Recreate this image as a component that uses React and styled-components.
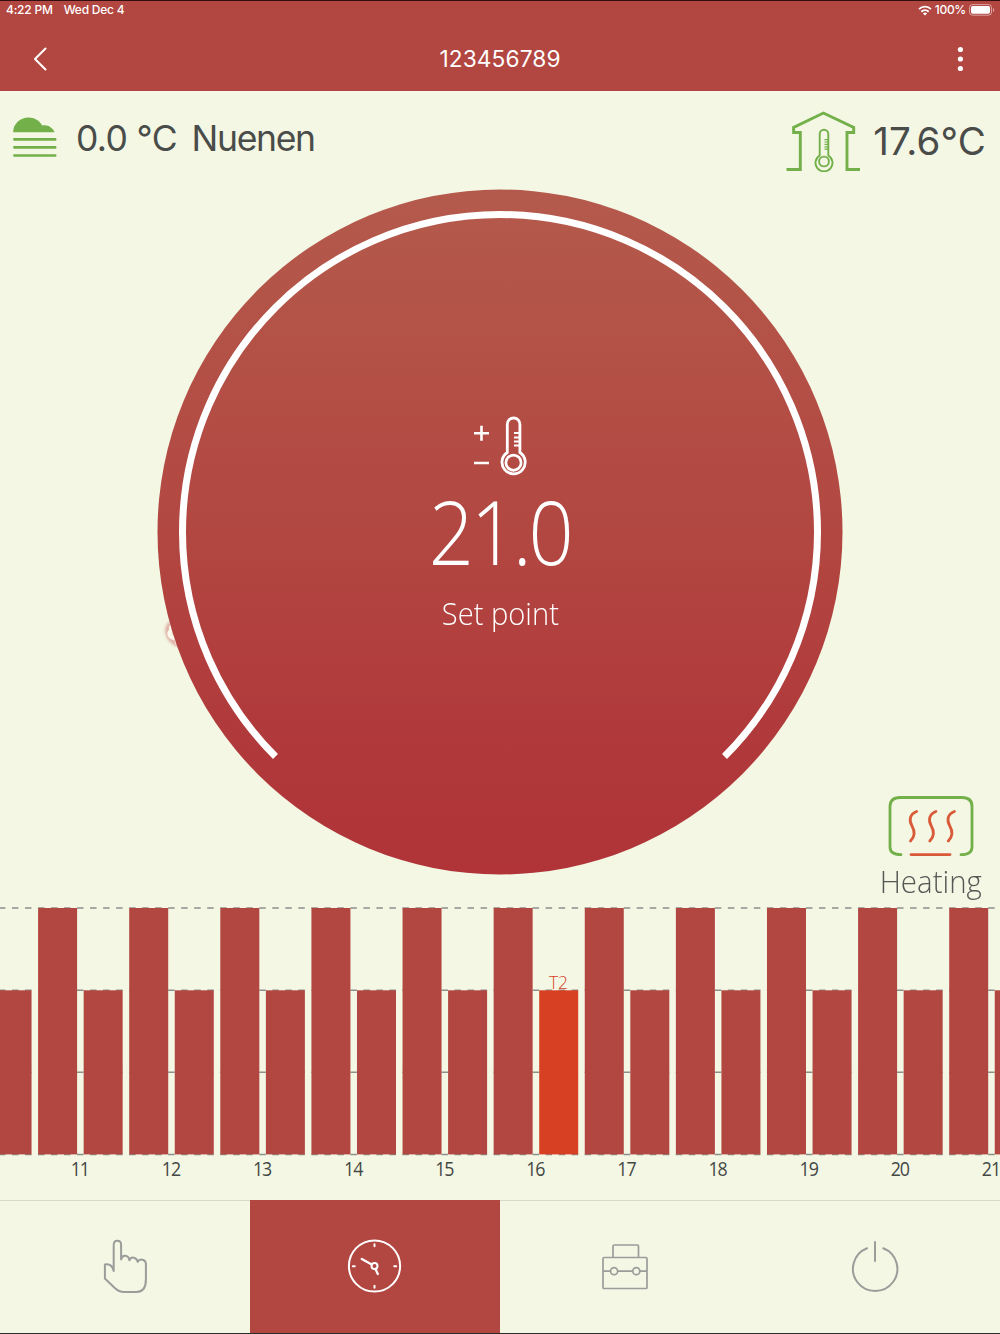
import React from "react";
import styled, { createGlobalStyle } from "styled-components";

const RED = "#b24640";
const CREAM = "#f3f7e4";
const GREEN = "#73b04a";
const GREY = "#9a9d9a";

const GlobalStyle = createGlobalStyle`
  * { box-sizing: border-box; }
  body { margin: 0; background: ${CREAM}; }
  svg { display: block; flex: none; }
`;

const Screen = styled.div`
  width: 1000px;
  height: 1334px;
  overflow: hidden;
  display: flex;
  flex-direction: column;
  background: ${CREAM};
  font-family: Inter, Roboto, sans-serif;
  border-bottom: 1px solid #2b2b2b;
`;

const Header = styled.header`
  height: 91px;
  flex: none;
  background: ${RED};
  border-top: 1px solid #33100f;
  color: #fff;
`;

const StatusBar = styled.div`
  height: 18px;
  display: flex;
  justify-content: space-between;
  align-items: center;
  padding: 0 5px 0 6px;
  font-size: 12px;
  font-weight: 500;
  line-height: 18px;
`;

const StatusGroup = styled.div`
  display: flex;
  align-items: center;
  gap: ${(p) => p.$gap}px;
  letter-spacing: ${(p) => p.$tracking || 0}px;
`;

const TitleBar = styled.div`
  height: 80px;
  display: grid;
  grid-template-columns: 80px 1fr 80px;
  align-items: center;
  justify-items: center;
`;

const Title = styled.h1`
  margin: 0;
  font-size: 22.7px;
  font-weight: 370;
  line-height: 28px;
  letter-spacing: 0.1px;
`;

const Climate = styled.section`
  height: 98px;
  flex: none;
  display: flex;
  justify-content: space-between;
  align-items: flex-start;
  padding: 19px 14px 0 12px;
  color: #4a4c4a;
  font-weight: 375;
`;

const Outdoor = styled.div`
  display: flex;
  align-items: center;
  padding-top: 4px;
  font-size: 35.5px;
  line-height: 42px;
`;

const Reading = styled.span`
  white-space: nowrap;
  margin-left: ${(p) => p.$left}px;
  padding-top: ${(p) => p.$drop || 0}px;
  letter-spacing: ${(p) => p.$tracking || 0}px;
`;

const Indoor = styled.div`
  display: flex;
  align-items: center;
  font-size: 38.5px;
  line-height: 62px;
`;

const Stage = styled.section`
  height: 718px;
  flex: none;
  display: grid;
  grid-template-columns: 157px 686px 157px;
`;

const SideColumn = styled.aside`
  display: flex;
  flex-direction: column;
  align-items: flex-end;
  justify-content: ${(p) => (p.$bottom ? "flex-end" : "flex-start")};
`;

const Dial = styled.div`
  display: grid;
  width: 686px;
  height: 686px;
  > * { grid-area: 1 / 1; }
`;

const DialContent = styled.div`
  display: flex;
  flex-direction: column;
  align-items: center;
  padding-top: 227px;
  color: #fff;
  font-family: "Open Sans", "Noto Sans", sans-serif;
  font-weight: 300;
`;

const SetValue = styled.div`
  font-size: 89px;
  line-height: 100px;
  margin-top: 3px;
  letter-spacing: -3.6px;
  transform: scaleX(0.89);
`;

const SetLabel = styled.div`
  font-size: 30.5px;
  line-height: 40px;
  margin-top: 12px;
  transform: scaleX(0.955);
`;

const Glint = styled.div`
  margin: 428px -29px 0 0;
`;

const Mode = styled.div`
  display: flex;
  flex-direction: column;
  align-items: center;
  width: 110px;
  margin: 0 14px 5px 0;
  color: #555855;
  font: 300 31px/42px "Open Sans", "Noto Sans", sans-serif;
`;

const ModeLabel = styled.span`
  margin-top: 3px;
  transform: scaleX(0.95);
`;

const Schedule = styled.section`
  height: 293px;
  flex: none;
`;

const Hour = styled.text`
  font: 390 20px "Open Sans", "Noto Sans", sans-serif;
  fill: #444844;
  text-anchor: middle;
  letter-spacing: -1.2px;
`;

const Period = styled.text`
  font: 300 17.5px "Open Sans", "Noto Sans", sans-serif;
  fill: #d84124;
  text-anchor: middle;
`;

const Tabs = styled.nav`
  flex: 1;
  display: grid;
  grid-template-columns: repeat(4, 1fr);
`;

const Tab = styled.button`
  border: 0;
  border-top: 1px solid ${(p) => (p.$active ? RED : "#d6dacb")};
  background: ${(p) => (p.$active ? RED : "transparent")};
  color: ${(p) => (p.$active ? "#fff" : GREY)};
  padding: 0 0 2px;
  display: flex;
  align-items: center;
  justify-content: center;
`;

const BackIcon = () => (
  <svg width="16" height="26" viewBox="0 0 16 26" fill="none" stroke="#fff" strokeWidth="2.1" strokeLinecap="round" strokeLinejoin="round">
    <path d="M13.5 2.5 3 13 13.5 23.5" />
  </svg>
);

const MoreIcon = () => (
  <svg width="8" height="28" viewBox="0 0 8 28" fill="#fff">
    <circle cx="4.4" cy="4.5" r="2.6" />
    <circle cx="4.4" cy="14" r="2.6" />
    <circle cx="4.4" cy="23.5" r="2.6" />
  </svg>
);

const WifiIcon = () => (
  <svg width="14" height="11" viewBox="0 0 14 11" fill="none" stroke="#fff" strokeWidth="1.9">
    <path d="M1 4.1a8.6 8.6 0 0 1 12 0M3.3 6.7a5.3 5.3 0 0 1 7.4 0" />
    <path d="M7 10.5 4.9 8.5a3 3 0 0 1 4.2 0z" fill="#fff" stroke="none" />
  </svg>
);

const BatteryIcon = () => (
  <svg width="26" height="12" viewBox="0 0 26 12">
    <rect x="0.5" y="0.6" width="22" height="10.6" rx="3" fill="none" stroke="#fff" strokeOpacity="0.5" />
    <rect x="2" y="2.1" width="19" height="7.6" rx="1.7" fill="#fff" />
    <path d="M24 4v4a2.2 2.2 0 0 0 0-4z" fill="#fff" fillOpacity="0.5" />
  </svg>
);

const FogIcon = () => (
  <svg width="46" height="42" viewBox="0 0 46 42">
    <path d="M1.2 16.2C1.2 8 8 1.6 16.4 1.6c6.2 0 11.2 3 13.8 8 5-1.4 10 1.5 12.5 6.6z" fill={GREEN} />
    <path d="M2.4 23.4h40.800M2.4 31.400h40.800M2.400 39.500h40.800" stroke={GREEN} strokeWidth="2.700" strokeLinecap="round" />
  </svg>
);

const HouseIcon = () => (
  <svg width="76" height="62" viewBox="0 0 76 62" fill="none" stroke={GREEN}>
    <path d="M1.500 59.500h13.800v-37H8.600v-5L38.400 3l30.300 14.500v5H62v37h13" strokeWidth="2.900" />
    <path d="M34.700 45.500V24a4.300 4.300 0 0 1 8.600 0v21.500a8.500 8.500 0 1 1-8.600 0z" strokeWidth="1.900" />
    <circle cx="39" cy="51.500" r="4.900" strokeWidth="1.900" />
    <path d="M39.500 29.600h3.500M39.500 32h3.500M39.500 34.400h3.500M39.500 36.800h3.500M39.500 39.200h3.500" strokeWidth="1.200" />
  </svg>
);

const SetpointIcon = () => (
  <svg width="56" height="62" viewBox="0 0 56 62" fill="none" stroke="#fff">
    <path d="M2 17.200h15M9.500 9.700v15M2 47h15" strokeWidth="2.600" />
    <path d="M35.300 36.500V8.300a6.300 6.300 0 0 1 12.600 0v28.200a11.600 11.600 0 1 1-12.600 0z" strokeWidth="2.800" />
    <circle cx="41.500" cy="46.700" r="7.600" strokeWidth="2.700" />
    <path d="M42 17h5M42 21.500h5M42 25.500h5M42 29.500h5" strokeWidth="1.900" />
  </svg>
);

const HeatingIcon = () => (
  <svg width="86" height="62" viewBox="0 0 86 62" fill="none" strokeLinecap="round">
    <path d="M13 59.700C6 59.700 2 57 2 52V11.500C2 5.500 5 2.500 12 2.500h62c7 0 10 3 10 9V52c0 5-4 7.700-11 7.700" stroke={GREEN} strokeWidth="2.800" />
    <path d="M23 59.600h39" stroke="#d95a38" strokeWidth="2.800" />
    {[0, 19.3, 37.8].map((x) => (
      <path key={x} transform={`translate(${x} 0)`} d="M28.600 16.500C22 19 20.500 25 24 31c3.500 6 2.500 11-1.500 15" stroke="#d95a38" strokeWidth="2.800" />
    ))}
  </svg>
);

const HandIcon = () => (
  <svg width="54" height="56" viewBox="-1.5 0 54 56" fill="none" stroke="currentColor" strokeWidth="2" strokeLinejoin="round" strokeLinecap="round">
    <path d="M14.2 33V7C14.200 4 15.800 2.700 17.900 2.700s3.700 1.300 3.700 4.300V21.500c1.200-5 7.200-5 8.300.8 1.400-4 7.200-3.600 8.300 1.600 1.800-3.600 7.800-2.800 8.200 1.600v16c0 8-2.900 12.500-9.400 12.500H24.500c-4 0-6.500-1.500-9.500-4.300L5.400 40.500V26.500c4.800-.8 7.600 1.500 8.800 6.500z" />
  </svg>
);

const ClockIcon = () => (
  <svg width="56" height="56" viewBox="0.5 0 56 56" fill="none" stroke="currentColor" strokeWidth="2" strokeLinecap="round">
    <circle cx="28" cy="28" r="25.600" />
    <circle cx="28" cy="28" r="3" />
    <path d="M25.200 26.400 15.300 20.900M29 31l2.300 5" strokeWidth="2.300" />
    <path d="M28 6.300v2M28 47.800v2M6.300 28.200h2M47.700 28.200h2" />
  </svg>
);

const ToolboxIcon = () => (
  <svg width="50" height="50" viewBox="0 0 50 50" fill="none" stroke="currentColor" strokeWidth="1.700" strokeLinejoin="round">
    <rect x="3" y="16.500" width="44" height="31" rx="1" />
    <path d="M13 16.500V5.300q0-1.300 1.300-1.300h22.900q1.300 0 1.300 1.300v11.200M3 30.200h7.500M17.700 30.200h15M40 30.200h7" />
    <circle cx="14.100" cy="30.200" r="3.500" />
    <circle cx="36.300" cy="30.200" r="3.500" />
  </svg>
);

const PowerIcon = () => (
  <svg width="50" height="54" viewBox="0 0 50 54" fill="none" stroke="currentColor" strokeWidth="2" strokeLinecap="round">
    <path d="M25 3v19M17 9.200a22.200 22.200 0 1 0 16.300 0" />
  </svg>
);

const DialFace = () => (
  <svg width="686" height="686" viewBox="157 188.500 686 686">
    <defs>
      <linearGradient id="dial" x1="0" y1="0" x2="0" y2="1">
        <stop offset="0" stopColor="#b45a4c" />
        <stop offset="0.500" stopColor="#b24741" />
        <stop offset="0.850" stopColor="#b0373a" />
        <stop offset="1" stopColor="#b03438" />
      </linearGradient>
    </defs>
    <circle cx="500" cy="531.500" r="342.500" fill="url(#dial)" />
    <path d="M275.500 756A317.500 317.500 0 1 1 724.500 756" fill="none" stroke="#fff" strokeWidth="7" />
  </svg>
);

const GlintMark = () => (
  <svg width="24" height="34" viewBox="0 0 24 34">
    <defs>
      <filter id="soft" x="-50%" y="-50%" width="200%" height="200%">
        <feGaussianBlur stdDeviation="1.700" />
      </filter>
    </defs>
    <path d="M9 6C3 11 4 22 16 28" fill="none" stroke="#dfa59c" strokeWidth="4" filter="url(#soft)" />
    <path d="M11 8c-3 1-3 4-1 5-5 2-3 7 1 8 3-1 4 1 4 6" fill="none" stroke="#fbf8ec" strokeWidth="3.400" />
  </svg>
);

const STEP = 45.555;
const BAR = 39;
const bars = Array.from({ length: 23 }, (_, i) => ({
  x: 38.1 + (i - 1) * STEP,
  tall: i % 2 === 1,
  current: i === 12,
}));
const hours = Array.from({ length: 11 }, (_, i) => 11 + i);

const ScheduleChart = () => (
  <svg width="1000" height="293" viewBox="0 907 1000 293">
    {[908, 990.2, 1072.3, 1154.5].map((y) => (
      <path key={y} d={`M-1.050 ${y}H1000`} stroke="#8d908a" strokeWidth="1.400" strokeDasharray="6.500 6.516" />
    ))}
    {bars.map((b) => (
      <rect
        key={b.x}
        x={b.x}
        y={b.tall ? 908 : 990.3}
        width={BAR}
        height={b.tall ? 246.4 : 164.1}
        fill={b.current ? "#d74023" : RED}
      />
    ))}
    <Period x="558.500" y="988.700">T2</Period>
    {hours.map((h, i) => (
      <Hour key={h} transform={`translate(${79.8 + i * 91.11} 1175.800) scale(0.890 1)`}>{h}</Hour>
    ))}
  </svg>
);

export default function App() {
  return (
    <Screen>
      <GlobalStyle />
      <Header>
        <StatusBar>
          <StatusGroup $gap={11} $tracking={-0.22}>
            <span>4:22 PM</span>
            <span>Wed Dec 4</span>
          </StatusGroup>
          <StatusGroup $gap={3} $tracking={-0.3}>
            <WifiIcon />
            <span>100%</span>
            <BatteryIcon />
          </StatusGroup>
        </StatusBar>
        <TitleBar>
          <BackIcon />
          <Title>123456789</Title>
          <MoreIcon />
        </TitleBar>
      </Header>
      <Climate>
        <Outdoor>
          <FogIcon />
          <Reading $left={18} $drop={4} $tracking={-0.65}>0.0 °C</Reading>
          <Reading $left={14.5} $drop={4} $tracking={-1.3}>Nuenen</Reading>
        </Outdoor>
        <Indoor>
          <HouseIcon />
          <Reading $left={12} $tracking={0.15}>17.6°C</Reading>
        </Indoor>
      </Climate>
      <Stage>
        <SideColumn>
          <Glint><GlintMark /></Glint>
        </SideColumn>
        <Dial>
          <DialFace />
          <DialContent>
            <SetpointIcon />
            <SetValue>21.0</SetValue>
            <SetLabel>Set point</SetLabel>
          </DialContent>
        </Dial>
        <SideColumn $bottom>
          <Mode>
            <HeatingIcon />
            <ModeLabel>Heating</ModeLabel>
          </Mode>
        </SideColumn>
      </Stage>
      <Schedule>
        <ScheduleChart />
      </Schedule>
      <Tabs>
        <Tab aria-label="Manual"><HandIcon /></Tab>
        <Tab aria-label="Schedule" $active><ClockIcon /></Tab>
        <Tab aria-label="Tools"><ToolboxIcon /></Tab>
        <Tab aria-label="Power"><PowerIcon /></Tab>
      </Tabs>
    </Screen>
  );
}
